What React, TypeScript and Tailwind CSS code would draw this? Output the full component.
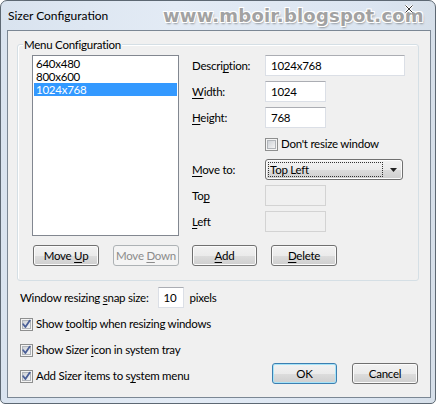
import React from 'react';

const ui = "font-['Lato','Segoe_UI',sans-serif] text-[11.5px] tracking-[-0.25px] text-black";

const btnBase =
  'h-[21px] flex items-center justify-center rounded-[3px] border leading-none';
const btnFace = 'bg-[linear-gradient(#f2f2f2_0%,#ebebeb_50%,#dddddd_51%,#cfcfcf_100%)]';
const btnNormal = `border-[#707070] ${btnFace} shadow-[inset_0_0_0_1px_#fbfbfb] text-black`;
const btnDefault = `border-[#3c7fb1] ${btnFace} shadow-[inset_0_0_0_1px_#a6e3f8] text-black`;
const btnDisabled = 'border-[#adb2b5] bg-[#f4f4f4] text-[#8b8b8b]';

function Button({
  children,
  width = 'w-[66px]',
  disabled,
  isDefault,
}: {
  children: React.ReactNode;
  width?: string;
  disabled?: boolean;
  isDefault?: boolean;
}) {
  const look = disabled ? btnDisabled : isDefault ? btnDefault : btnNormal;
  return (
    <div className={`${btnBase} ${look} ${width}`}>
      <span>{children}</span>
    </div>
  );
}

function TextBox({
  value,
  width,
  disabled,
}: {
  value?: string;
  width: string;
  disabled?: boolean;
}) {
  return (
    <div
      className={`h-[21px] ${width} flex items-center px-[5px] border ${
        disabled
          ? 'border-[#d3d3d3] bg-[#f0f0f0]'
          : 'border-[#dbdfe6] border-t-[#abadb3] bg-white'
      }`}
    >
      {value}
    </div>
  );
}

function CheckBox({ checked }: { checked?: boolean }) {
  return (
    <svg width="13" height="13" viewBox="0 0 13 13" className="shrink-0">
      <defs>
        <linearGradient id={checked ? 'cbOn' : 'cbOff'} x1="0" y1="0" x2="1" y2="1">
          <stop offset="0" stopColor="#cbcfd5" />
          <stop offset="1" stopColor="#f6f6f6" />
        </linearGradient>
      </defs>
      <rect x="0.5" y="0.5" width="12" height="12" fill="#f4f4f4" stroke="#8e8f8f" />
      <rect x="2.5" y="2.5" width="8" height="8" fill={`url(#${checked ? 'cbOn' : 'cbOff'})`} stroke="#b0b4b9" />
      {checked && (
        <path d="M3.2 6.3 L5.4 9 L9.8 2.6" fill="none" stroke="#4a5f97" strokeWidth="1.8" strokeLinecap="round" strokeLinejoin="round" />
      )}
    </svg>
  );
}

function U({ children }: { children: React.ReactNode }) {
  return <span className="underline underline-offset-[2px]">{children}</span>;
}

function FormRow({ label, children }: { label: React.ReactNode; children: React.ReactNode }) {
  return (
    <div className="flex h-[21px] items-center">
      <div className="w-[73px]">{label}</div>
      {children}
    </div>
  );
}

export default function App() {
  const items = ['640x480', '800x600', '1024x768'];
  const selected = 2;

  return (
    <div
      className={`${ui} relative flex h-[404px] w-[436px] flex-col overflow-hidden rounded-t-[7px] rounded-b-[5px] border border-[#5d6873] bg-[linear-gradient(90deg,#d9e3ef_0%,#e3ebf5_40%,#dbe5f1_85%,#d6dfe9_100%)]`}
    >
      {/* title bar */}
      <div className="flex h-[29px] shrink-0 items-center pl-[7px] pt-[1px] text-[12px] tracking-normal">Sizer Configuration</div>

      <div className="absolute left-[162px] top-[1px] font-['DejaVu_Sans',sans-serif] text-[18px] font-bold tracking-[0.2px] text-[#a2a2a2] [text-shadow:-1px_-1px_0_#fff,1px_1px_0_#fff,1px_-1px_0_#fff,-1px_1px_0_#fff,1px_2px_2px_rgba(0,0,0,0.35)]">
        www.mboir.blogspot.com
      </div>
      <svg className="absolute left-[403px] top-[3px]" width="10" height="10" viewBox="0 0 10 10">
        <path d="M1.5 1.5 L8.5 8.5 M8.5 1.5 L1.5 8.5" stroke="#ffffff" strokeWidth="2.6" />
        <path d="M1.5 1.5 L8.5 8.5 M8.5 1.5 L1.5 8.5" stroke="#3a3a3a" strokeWidth="1" />
      </svg>

      {/* client area */}
      <div className="ml-[6px] mr-[4px] mb-[5px] flex h-[368px] flex-col border border-[#7b8794] bg-[#f0f0f0]">
        {/* Menu Configuration group */}
        <div className="relative ml-[9px] mt-[13px] h-[237px] w-[402px] rounded-[3px] border border-[#d5dfe5] shadow-[inset_1px_1px_0_#ffffff]">
          <div className="absolute left-[5px] top-[-9px] bg-[#f0f0f0] px-[1px]">Menu Configuration</div>

          <div className="grid grid-cols-[147px_auto] gap-x-[13px] gap-y-[9px] pl-[14px] pt-[10px]">
            {/* list box */}
            <div className="h-[181px] border border-[#828790] bg-white p-[1px]">
              {items.map((it, i) => (
                <div
                  key={it}
                  className={`h-[13px] pl-[2px] leading-[13px] ${
                    i === selected ? 'bg-[#3399ff] text-white' : ''
                  }`}
                >
                  {it}
                </div>
              ))}
            </div>

            {/* fields */}
            <div className="flex flex-col gap-[5px]">
              <FormRow label={<>Descri<U>p</U>tion:</>}>
                <TextBox value="1024x768" width="w-[140px]" />
              </FormRow>
              <FormRow label={<><U>W</U>idth:</>}>
                <TextBox value="1024" width="w-[61px]" />
              </FormRow>
              <FormRow label={<><U>H</U>eight:</>}>
                <TextBox value="768" width="w-[61px]" />
              </FormRow>
              <FormRow label="">
                <div className="flex items-center gap-[3px] pt-[1px]">
                  <CheckBox />
                  <span>Don't resize window</span>
                </div>
              </FormRow>
              <FormRow label={<><U>M</U>ove to:</>}>
                <div className={`flex h-[21px] w-[138px] items-center rounded-[3px] border border-[#707070] ${btnFace} shadow-[inset_0_0_0_1px_#fbfbfb] pl-[2px] pr-[5px]`}>
                  <div className="flex h-[15px] flex-1 items-center border border-dotted border-[#333] pl-[1px]">Top Left</div>
                  <svg width="7" height="4" viewBox="0 0 7 4" className="ml-[7px]">
                    <path d="M0 0 H7 L3.5 4 Z" fill="#222" />
                  </svg>
                </div>
              </FormRow>
              <FormRow label={<>To<U>p</U></>}>
                <TextBox width="w-[61px]" disabled />
              </FormRow>
              <FormRow label={<><U>L</U>eft</>}>
                <TextBox width="w-[61px]" disabled />
              </FormRow>
            </div>

            {/* list buttons */}
            <div className="flex gap-[14px] pl-[1px]">
              <Button>Move <U>U</U>p</Button>
              <Button disabled>Move <U>D</U>own</Button>
            </div>
            <div className="flex gap-[14px]">
              <Button width="w-[65px]"><U>A</U>dd</Button>
              <Button><U>D</U>elete</Button>
            </div>
          </div>
        </div>

        {/* general options */}
        <div className="flex px-[12px] pt-[6px]">
          <div className="flex flex-col">
            <div className="flex h-[21px] items-center">
              <span>Window resizing <U>s</U>nap size:</span>
              <div className="ml-[9px] flex h-[21px] w-[26px] items-center border border-[#dbdfe6] border-t-[#abadb3] bg-white pl-[5px]">10</div>
              <span className="ml-[6px]">pixels</span>
            </div>
            <div className="mt-[3px] flex h-[26px] items-center gap-[3px]">
              <CheckBox checked />
              <span>Show <U>t</U>ooltip when resizing windows</span>
            </div>
            <div className="flex h-[26px] items-center gap-[3px]">
              <CheckBox checked />
              <span>Show Sizer <U>i</U>con in system tray</span>
            </div>
            <div className="flex h-[26px] items-center gap-[3px]">
              <CheckBox checked />
              <span>Add Sizer items to s<U>y</U>stem menu</span>
            </div>
          </div>
          <div className="ml-auto mt-[76px] flex gap-[15px]">
            <Button width="w-[65px]" isDefault>OK</Button>
            <Button>Cancel</Button>
          </div>
        </div>
      </div>
    </div>
  );
}
